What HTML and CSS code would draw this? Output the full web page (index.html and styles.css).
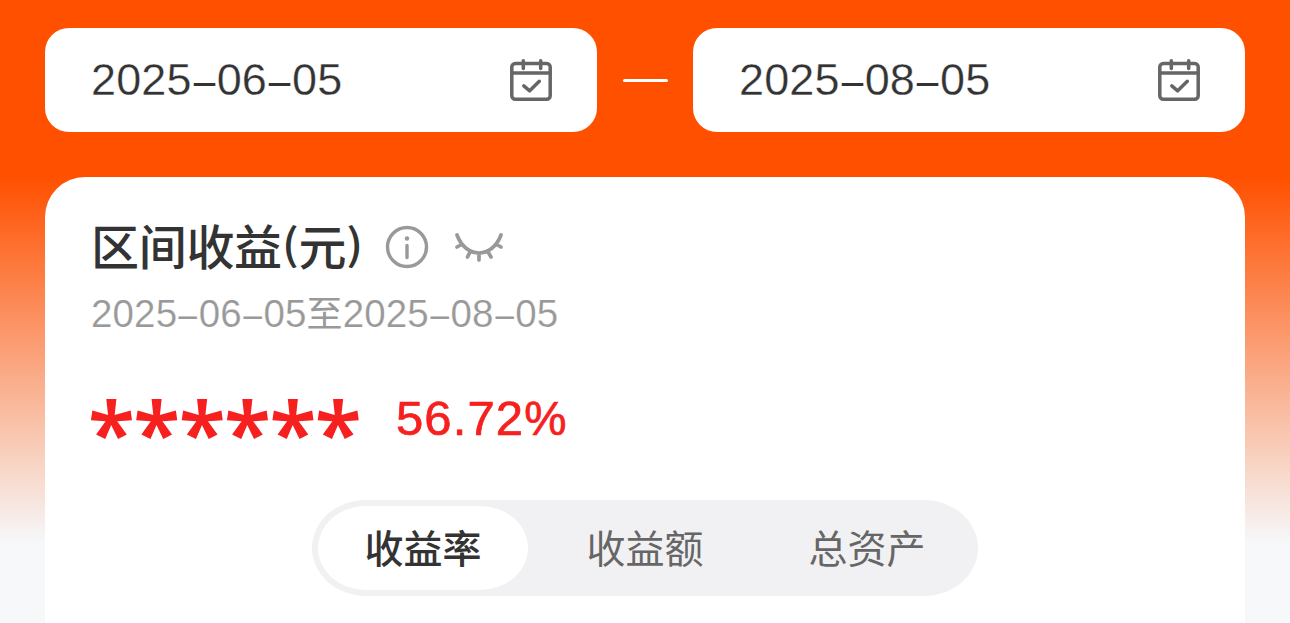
FILE: index.html
```html
<!DOCTYPE html>
<html lang="zh-CN">
<head>
<meta charset="utf-8">
<title>区间收益</title>
<link rel="stylesheet" href="styles.css">
</head>
<body>
<main class="page">
  <div class="range">
    <div class="date"><span class="date-text">2025<span class="sep">–</span>06<span class="sep">–</span>05</span>
      <svg class="calendar" viewBox="0 0 44 44"><rect x="2.800" y="5.500" width="38.400" height="35.700" rx="3.500"/><path d="M3 15H41M14.300 2.800V10.500M31.700 2.800V10.500"/><path class="tick" d="M14.800 27.800L20.700 32.800L30.300 23.300"/></svg>
    </div>
    <span class="dash"></span>
    <div class="date"><span class="date-text">2025<span class="sep">–</span>08<span class="sep">–</span>05</span>
      <svg class="calendar" viewBox="0 0 44 44"><rect x="2.800" y="5.500" width="38.400" height="35.700" rx="3.500"/><path d="M3 15H41M14.300 2.800V10.500M31.700 2.800V10.500"/><path class="tick" d="M14.800 27.800L20.700 32.800L30.300 23.300"/></svg>
    </div>
  </div>
  <section class="card">
    <header class="heading">
      <h1 class="title">区间收益<span class="paren">(</span>元<span class="paren">)</span></h1>
      <svg class="info" viewBox="0 0 44 44"><circle cx="22" cy="22" r="19.500"/><path d="M22 20.500V32.500"/><circle class="dot" cx="22" cy="13.500" r="2.200"/></svg>
      <svg class="eye" viewBox="0 0 50 30"><path d="M3 3C12 27 38 27 47 3M7.500 12.500L3 15M16.500 19L13.500 25M25 21V28M33.500 19L37 25M42.500 12.500L47 15"/></svg>
    </header>
    <p class="period">2025<span class="sep">–</span>06<span class="sep">–</span>05<span class="to">至</span>2025<span class="sep">–</span>08<span class="sep">–</span>05</p>
    <div class="profit"><span class="masked">******</span><span class="percent">56.72<span class="unit">%</span></span></div>
    <nav class="tabs">
      <span class="tab active">收益率</span>
      <span class="tab">收益额</span>
      <span class="tab">总资产</span>
    </nav>
  </section>
</main>
</body>
</html>
```

FILE: styles.css
```css
* { box-sizing: border-box; }
body { margin: 0; font-family: "Liberation Sans", "Noto Sans CJK SC", sans-serif; color: #333; }
.page {
  height: 623px;
  padding: 28px 45px 0;
  overflow: hidden;
  background: linear-gradient(#ff5000 0, #ff5000 177px, #f6f8fa 543px);
}
.range { display: flex; align-items: center; justify-content: space-between; height: 104px; }
.date {
  display: flex; align-items: center; justify-content: space-between;
  width: 552px; height: 104px; padding: 0 44px 0 46px;
  border-radius: 24px; background: #fff;
}
.date-text { font-size: 45px; line-height: 52px; letter-spacing: 0.1px; -webkit-text-stroke: 0.3px #fff; }
.sep { display: inline-block; transform: translateY(1px) scaleX(0.86); -webkit-text-stroke: 0; }
.calendar { width: 44px; height: 44px; fill: none; stroke: #666; stroke-width: 3.500; stroke-linecap: round; stroke-linejoin: round; }
.dash { width: 45px; height: 3px; border-radius: 1.5px; background: #fff; }
.card { height: 500px; margin-top: 45px; padding: 35px 46px 0; border-radius: 40px; background: #fff; }
.heading { display: flex; align-items: center; height: 70px; }
.title { width: 270px; margin: -6px 0 0; font: 500 48px/70px "Noto Sans CJK SC", sans-serif; letter-spacing: -0.3px; white-space: nowrap; }
.paren { display: inline-block; transform: translateY(-2px) scaleY(0.88); }
.info { width: 44px; height: 44px; margin-left: 24px; fill: none; stroke: #999; stroke-width: 3.400; stroke-linecap: round; }
.info .dot { fill: #999; stroke: none; }
.eye { width: 50px; height: 30px; margin-left: 25px; fill: none; stroke: #999; stroke-width: 3.700; stroke-linecap: round; }
.period { margin: 9px 0 0; height: 46px; font-size: 38.500px; line-height: 46px; letter-spacing: 0.140px; color: #999; white-space: nowrap; -webkit-text-stroke: 0.2px #fff; }
.to { font-family: "Noto Sans CJK SC", sans-serif; font-size: 36px; line-height: 40px; -webkit-text-stroke: 0; }
.profit { display: flex; align-items: center; height: 80px; margin-top: 42px; color: #f6201f; }
.masked { width: 308px; height: 80px; margin-left: -3px; font: 600 86px/106px "Noto Sans", sans-serif; letter-spacing: -1.600px; white-space: nowrap; }
.percent { margin-top: -2px; font-size: 49px; line-height: 56px; letter-spacing: 1.1px; -webkit-text-stroke: 0.7px #f6201f; }
.unit { font-size: 47.500px; letter-spacing: 0; }
.tabs {
  display: grid; grid-template-columns: repeat(3, 210px); gap: 12px;
  width: 666px; height: 96px; margin: 41px auto 0; padding: 6px;
  border-radius: 54px / 48px; background: #f1f1f4;
}
.tab { height: 84px; text-align: center; font: 400 39px/80px "Noto Sans CJK SC", sans-serif; color: #666; }
.active { border-radius: 48px / 42px; background: #fff; color: #333; font-weight: 500; }
```
